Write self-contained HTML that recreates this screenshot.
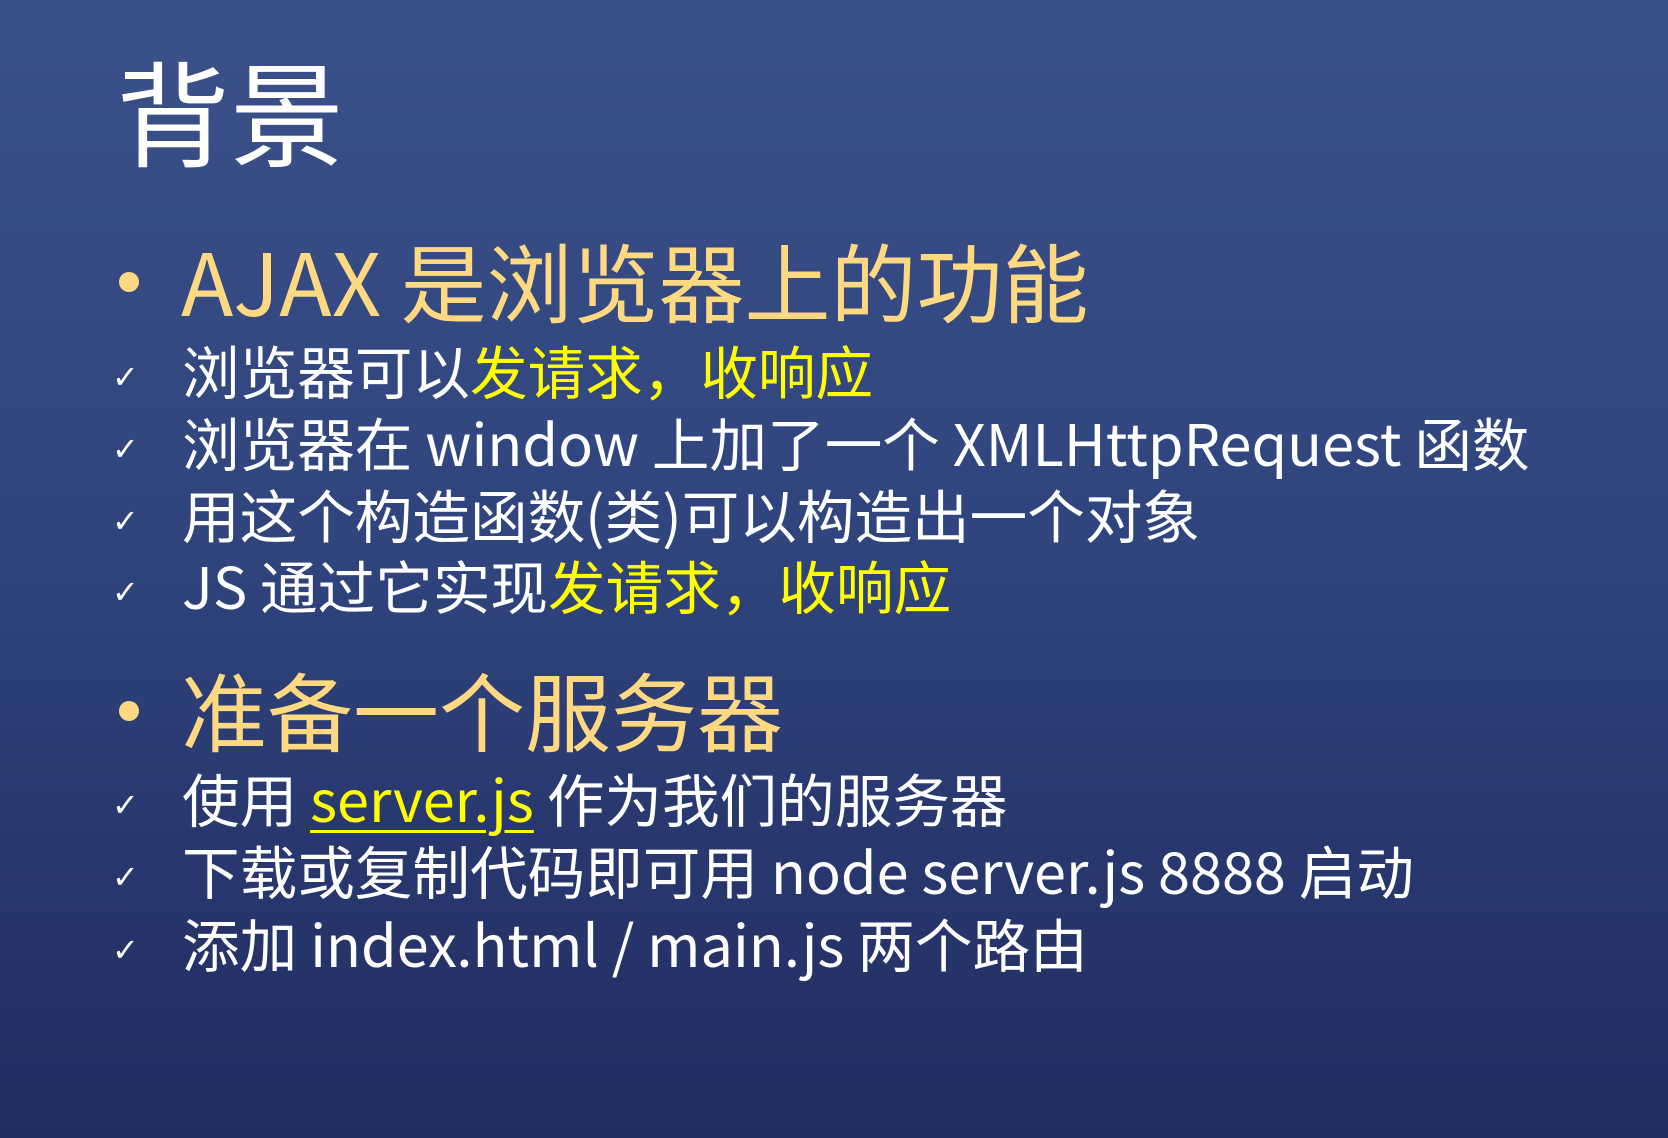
<!DOCTYPE html>
<html><head><meta charset="utf-8"><style>
html,body{margin:0;padding:0}
body{width:1668px;height:1138px;overflow:hidden;background:linear-gradient(180deg,#3b5189 0%,#2f437c 50%,#212c60 100%);font-family:"Noto Sans CJK SC","Liberation Sans",sans-serif;color:#fff;position:relative}
.t{position:absolute;white-space:nowrap;line-height:1}
.h1{left:116px;top:52px;font-size:114px}
.hd{left:181px;font-size:86px;color:#ffd982}
.dot{position:absolute;width:20px;height:20px;border-radius:50%;background:#ffd982}
.s{left:182px;font-size:57.6px}
.ck{position:absolute;left:112px;font-size:32px;font-family:"DejaVu Sans",sans-serif;color:#fff}
.y{color:#ffff00}
u{text-decoration-thickness:3px;text-underline-offset:8px}
</style></head><body>
<div class="t h1">背景</div>
<div class="dot" style="left:119px;top:272px"></div>
<div class="t hd" style="top:236px">AJAX 是浏览器上的功能</div>
<div class="ck" style="top:358px">✓</div>
<div class="t s" style="top:341px">浏览器可以<span class="y">发请求，收响应</span></div>
<div class="ck" style="top:430px">✓</div>
<div class="t s" style="top:413px">浏览器在 window 上加了一个 XMLHttpRequest 函数</div>
<div class="ck" style="top:502px">✓</div>
<div class="t s" style="top:485px">用这个构造函数(类)可以构造出一个对象</div>
<div class="ck" style="top:573px">✓</div>
<div class="t s" style="top:556px">JS 通过它实现<span class="y">发请求，收响应</span></div>
<div class="dot" style="left:119px;top:701px"></div>
<div class="t hd" style="top:665px">准备一个服务器</div>
<div class="ck" style="top:786px">✓</div>
<div class="t s" style="top:769px">使用 <u class="y">server.js</u> 作为我们的服务器</div>
<div class="ck" style="top:858px">✓</div>
<div class="t s" style="top:841px">下载或复制代码即可用 node server.js 8888 启动</div>
<div class="ck" style="top:931px">✓</div>
<div class="t s" style="top:914px">添加 index.html / main.js 两个路由</div>
</body></html>
